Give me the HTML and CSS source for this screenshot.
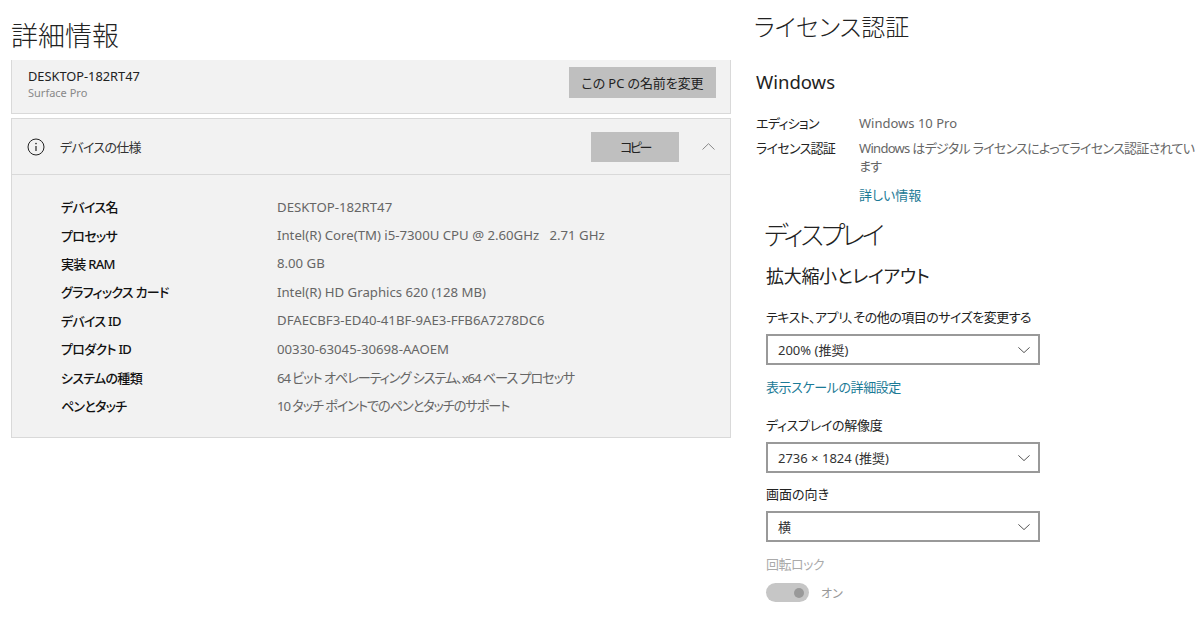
FILE: index.html
```html
<!DOCTYPE html>
<html lang="ja">
<head>
<meta charset="utf-8">
<title>詳細情報</title>
<link rel="stylesheet" href="styles.css">
</head>
<body>
<div class="page">
  <main class="left">
    <h1 class="title">詳細情報</h1>
    <section class="panel name-panel">
      <div class="name-block">
        <div class="pc-name">DESKTOP-182RT47</div>
        <div class="pc-model">Surface Pro</div>
      </div>
      <div class="btn btn-rename">この PC の名前を変更</div>
    </section>
    <section class="panel spec-panel">
      <header class="spec-head">
        <svg class="info-icon" width="18" height="18" viewBox="0 0 18 18" aria-hidden="true"><circle cx="9" cy="9" r="8" fill="none" stroke="#222" stroke-width="1"/><path d="M9 8v5" stroke="#222" stroke-width="1.2"/><circle cx="9" cy="5.6" r=".8" fill="#222"/></svg>
        <span class="spec-title">デバイスの仕様</span>
        <div class="btn btn-copy">コピー</div>
        <svg class="chev-up" width="13" height="7" viewBox="0 0 13 7" aria-hidden="true"><path d="M.5 6.5 6.5.7l6 5.8" fill="none" stroke="#888" stroke-width="1"/></svg>
      </header>
      <dl class="specs">
        <dt>デバイス名</dt><dd>DESKTOP-182RT47</dd>
        <dt>プロセッサ</dt><dd>Intel(R) Core(TM) i5-7300U CPU @ 2.60GHz&nbsp;&nbsp; 2.71 GHz</dd>
        <dt>実装 RAM</dt><dd>8.00 GB</dd>
        <dt>グラフィックス カード</dt><dd>Intel(R) HD Graphics 620 (128 MB)</dd>
        <dt>デバイス ID</dt><dd>DFAECBF3-ED40-41BF-9AE3-FFB6A7278DC6</dd>
        <dt>プロダクト ID</dt><dd>00330-63045-30698-AAOEM</dd>
        <dt>システムの種類</dt><dd class="dd-ja">64 ビット オペレーティング システム、x64 ベース プロセッサ</dd>
        <dt>ペンとタッチ</dt><dd class="dd-ja">10 タッチ ポイントでのペンとタッチのサポート</dd>
      </dl>
    </section>
  </main>
  <aside class="right">
    <section class="license">
      <h1 class="title-r">ライセンス認証</h1>
      <h2 class="win">Windows</h2>
      <div class="lic-grid">
        <div class="lic-key">エディション</div><div class="lic-val">Windows 10 Pro</div>
        <div class="lic-key">ライセンス認証</div><div class="lic-val lic-val-ja">Windows はデジタル ライセンスによってライセンス認証されています</div>
        <div></div><a class="link lic-link">詳しい情報</a>
      </div>
    </section>
    <section class="display">
      <h1 class="title-d">ディスプレイ</h1>
      <h2 class="sub">拡大縮小とレイアウト</h2>
      <div class="label size-label">テキスト、アプリ、その他の項目のサイズを変更する</div>
      <div class="select"><span>200% (推奨)</span><svg class="chev" width="12" height="6" viewBox="0 0 12 6" aria-hidden="true"><path d="M.4.4 6 5.6 11.6.4" fill="none" stroke="#555" stroke-width="1"/></svg></div>
      <a class="link scale-link">表示スケールの詳細設定</a>
      <div class="label res-label">ディスプレイの解像度</div>
      <div class="select"><span>2736 × 1824 (推奨)</span><svg class="chev" width="12" height="6" viewBox="0 0 12 6" aria-hidden="true"><path d="M.4.4 6 5.6 11.6.4" fill="none" stroke="#555" stroke-width="1"/></svg></div>
      <div class="label ori-label">画面の向き</div>
      <div class="select"><span>横</span><svg class="chev" width="12" height="6" viewBox="0 0 12 6" aria-hidden="true"><path d="M.4.4 6 5.6 11.6.4" fill="none" stroke="#555" stroke-width="1"/></svg></div>
      <div class="label lock-label">回転ロック</div>
      <div class="toggle-row"><span class="toggle"><span class="knob"></span></span><span class="toggle-text">オン</span></div>
    </section>
  </aside>
</div>
</body>
</html>
```
FILE: styles.css
```css
* { box-sizing: border-box; }
html, body { margin: 0; padding: 0; background: #fff; }
body {
  width: 1200px; height: 628px; overflow: hidden;
  font-family: "Noto Sans", "Noto Sans CJK JP", sans-serif;
  font-feature-settings: "palt";
  font-size: 13px; color: #1a1a1a;
}
h1, h2, dl, dd, dt { margin: 0; font-weight: 400; }
.page { display: flex; height: 628px; }
.left { width: 731px; margin-left: 11px; flex: none; }
.title { font-size: 27px; line-height: 36px; height: 60px; padding-top: 17px; color: #222; font-weight: 300; font-family: "Noto Sans CJK JP", sans-serif; }
.panel { background: #f2f2f2; border: 1px solid #d9d9d9; }
.name-panel {
  width: 720px; height: 54px; border-top: 0; display: flex; align-items: flex-start;
  justify-content: space-between; padding: 7px 14px 0 16px;
}
.name-block { margin-top: 1px; }
.pc-name { font-size: 12.8px; line-height: 17px; color: #222; }
.pc-model { font-size: 11px; line-height: 16px; color: #888; }
.btn { background: #bfbfbf; display: flex; align-items: center; justify-content: center; color: #222; font-size: 13px; }
.btn-rename { width: 147px; height: 31px; letter-spacing: -.1px; }
.spec-panel { width: 720px; height: 320px; margin-top: 4px; }
.spec-head { height: 56px; border-bottom: 1px solid #d9d9d9; display: flex; align-items: center; padding: 0 15px 0 15px; }
.info-icon { flex: none; }
.spec-title { margin-left: 15px; font-size: 13px; color: #333; letter-spacing: -.7px; }
.btn-copy { width: 88px; height: 30px; margin-left: auto; margin-right: 23px; letter-spacing: -2.5px; }
.chev-up { flex: none; }
.specs { display: grid; grid-template-columns: 216px 1fr; grid-auto-rows: 28.4px; padding: 17.5px 0 0 49px; align-items: center; }
.specs dt { font-size: 13px; color: #111; font-weight: 500; white-space: nowrap; letter-spacing: -.7px; }
.specs dd { font-size: 13.2px; color: #666; white-space: nowrap; }
.specs .dd-ja { letter-spacing: -1.1px; }
.right { flex: 1; min-width: 0; padding-left: 12px; }
.license { height: 208px; }
.title-r { font-size: 24px; line-height: 36px; padding-top: 8px; height: 46px; font-weight: 300; color: #222; font-family: "Noto Sans CJK JP", sans-serif; }
.win { font-size: 18.5px; line-height: 24px; margin-top: 24px; margin-left: 2px; color: #222; }
.lic-grid { display: grid; grid-template-columns: 103px 338px; margin-top: 20px; margin-left: 2px; row-gap: 7px; font-size: 13px; line-height: 18px; }
.lic-key { color: #222; letter-spacing: -.7px; white-space: nowrap; }
.lic-val { color: #666; }
.lic-val-ja { letter-spacing: -.7px; }
.lic-link { margin-top: 4px; }
.link { color: #1b7a96; font-size: 13px; display: block; }
.display { margin-left: 12px; width: 274px; }
.title-d { font-size: 26px; line-height: 36px; margin-top: 8px; margin-left: -2px; font-weight: 300; color: #222; letter-spacing: -3px; font-family: "Noto Sans CJK JP", sans-serif; }
.sub { font-size: 18px; line-height: 26px; margin-top: 11px; color: #222; letter-spacing: -.3px; }
.label { font-size: 13px; line-height: 18px; color: #222; white-space: nowrap; }
.size-label { margin-top: 19px; letter-spacing: -.5px; }
.select {
  width: 274px; height: 31px; border: 2px solid #999; margin-top: 8px;
  display: flex; align-items: center; justify-content: space-between;
  padding: 0 8px 0 10px; font-size: 13px; color: #333;
}
.scale-link { margin-top: 13px; line-height: 18px; letter-spacing: -.4px; }
.res-label { margin-top: 20px; letter-spacing: -.3px; }
.ori-label { margin-top: 12px; }
.lock-label { margin-top: 13px; color: #aaa; letter-spacing: -.5px; }
.toggle-row { display: flex; align-items: center; margin-top: 10px; }
.toggle { width: 43px; height: 19px; border-radius: 10px; background: #c6c6c6; display: flex; align-items: center; justify-content: flex-end; padding-right: 5px; }
.knob { width: 10px; height: 10px; border-radius: 50%; background: #999; }
.toggle-text { margin-left: 12px; color: #999; font-size: 12px; }
```
